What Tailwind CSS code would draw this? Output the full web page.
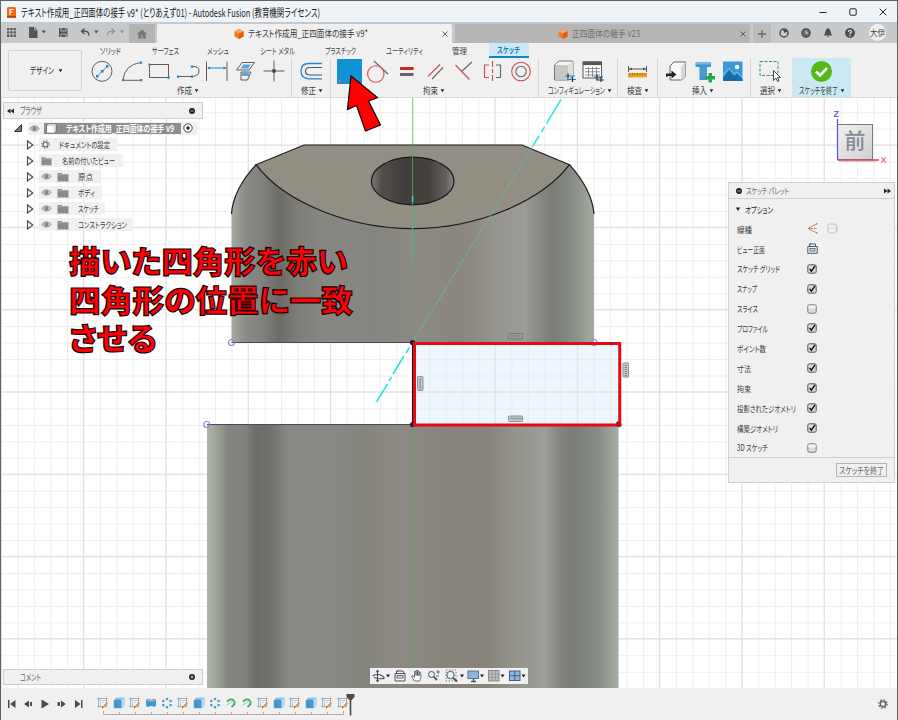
<!DOCTYPE html>
<html lang="ja">
<head>
<meta charset="utf-8">
<title>Autodesk Fusion</title>
<script src="https://cdn.jsdelivr.net/npm/@tailwindcss/browser@4"></script>
</head>
<body class="w-[898px] h-[720px] overflow-hidden bg-[#5f6262] font-['Noto_Sans_CJK_JP','Noto_Sans',sans-serif] text-[9px] leading-none text-[#3c3c3c]">
<svg width="0" height="0" class="absolute">
  <defs>
    <symbol id="eye" viewBox="0 0 12 10"><path d="M.8 5Q6-.8 11.2 5Q6 10.8.8 5Z" fill="#ddd" stroke="#858585" stroke-width="1.1"/><circle cx="6" cy="5" r="2.3" fill="#858585"/></symbol>
    <symbol id="folder" viewBox="0 0 12 10"><path d="M.5 1h4l1 1H11.500v7.500H.5Z" fill="#8c8c8c"/><path d="M1 2.700h10.500" stroke="#c9c9c9" stroke-width=".6"/></symbol>
    <symbol id="tri" viewBox="0 0 8 10"><path d="M1.500 1L6.800 5L1.500 9Z" fill="#fff" stroke="#444" stroke-width="1.1"/></symbol>
    <symbol id="logo" viewBox="0 0 10 10"><path d="M5 0L9.500 2.300V7.600L5 10L.5 7.600V2.300Z" fill="#f47a20"/><path d="M5 0L9.500 2.300L5 4.600L.5 2.300Z" fill="#fba768"/><path d="M5 4.600L9.500 2.300V7.600L5 10Z" fill="#e0600f"/></symbol>
    <symbol id="on" viewBox="0 0 10 10"><rect x=".8" y=".8" width="8.400" height="8.400" rx="1.600" fill="#d9d9d9" stroke="#555"/><path d="M2.600 4.800L4.400 7.200L8 1.800" fill="none" stroke="#111" stroke-width="1.400"/></symbol>
    <symbol id="off" viewBox="0 0 10 10"><rect x=".8" y=".8" width="8.400" height="8.400" rx="1.600" fill="#dcdcdc" stroke="#777"/><rect x="1.500" y="1.500" width="7" height="3" fill="#f4f4f4"/></symbol>
    <symbol id="x" viewBox="0 0 8 8"><path d="M1.500 1.500L6.500 6.500M6.500 1.500L1.500 6.500" stroke="#555" stroke-width=".9"/></symbol>
    <symbol id="sk" viewBox="0 0 12 12"><path d="M1.500 1.500h8v8h-8Z" fill="#f3f8fb" stroke="#8b99a3" stroke-width=".8"/><path d="M3.500 1v8.500M1 3.500h8.500M3.500 8L8 3" stroke="#9fb5c4" stroke-width=".6"/><path d="M5.500 10.500L10.500 5.500" stroke="#f08a2c" stroke-width="1.700"/><path d="M4.800 11.200L6 10" stroke="#444" stroke-width="1"/><path d="M.7.700h1.500v1.500H.7ZM8.800.700h1.500v1.500H8.800ZM.7 8.800h1.500v1.500H.7Z" fill="#5ca9dc"/></symbol>
    <symbol id="bx" viewBox="0 0 12 12"><path d="M1 3L3 1H11V9L9 11H1Z" fill="#cfe1ee" stroke="#7c9fb8" stroke-width=".5"/><rect x="1" y="3" width="7.500" height="8" rx="1" fill="#3d97d8"/><path d="M1 3L3 1.200H10.500L8.500 3Z" fill="#7dbdea"/></symbol>
    <symbol id="rv" viewBox="0 0 12 12"><path d="M1 4Q1 2 3 2Q6 4 9 2Q11 2 11 4V8Q11 10 9 10Q6 8 3 10Q1 10 1 8Z" fill="#3d97d8"/><path d="M1.500 3.800Q2 2.300 3 2.300Q6 4 9 2.300Q10.500 2.500 10.500 3.800Q6 6 1.500 3.800Z" fill="#9bcbea" stroke="#6a7a86" stroke-width=".5"/></symbol>
    <symbol id="pt" viewBox="0 0 12 12"><g fill="#4d9fd8"><rect x="4.800" y=".8" width="2.300" height="2.300"/><rect x="8.500" y="2.800" width="2.300" height="2.300"/><rect x="8.500" y="7" width="2.300" height="2.300"/><rect x="4.800" y="9" width="2.300" height="2.300"/><rect x="1.200" y="7" width="2.300" height="2.300"/><rect x="1.200" y="2.800" width="2.300" height="2.300"/></g></symbol>
    <symbol id="gr" viewBox="0 0 12 12"><path d="M2 4.500Q6 1 8.800 3.500Q11.300 6.500 6.500 10" fill="none" stroke="#4ba567" stroke-width="1.700"/><path d="M1.500 8.500Q5.500 4.500 8 5.500" fill="none" stroke="#b9dcc3" stroke-width="1.500"/></symbol>
    <symbol id="dn" viewBox="0 0 6 6"><path d="M.8 1.500H5.200L3 5Z" fill="#222"/></symbol>
  </defs>
</svg>

<div class="flex flex-col w-[896px] h-[719px] ml-px mt-px pt-px bg-[#f0f0f0]">
  <!-- title bar -->
  <header class="flex items-center h-[20px] bg-[#eff4f9] text-[11px] text-[#1b1b1b] pl-[6px]">
    <svg class="w-[9px] h-[11px] mr-[5px]" viewBox="0 0 9 11"><rect width="9" height="11" rx="1.500" fill="#ee6a12"/><path d="M3 8V2.500H6.300M3 5H5.600" fill="none" stroke="#fff" stroke-width="1.200"/><path d="M0 9h9v1.500H0Z" fill="#a8410a"/></svg>
    <span data-w="299">テキスト作成用_正四面体の接手 v9* (とりあえず01) - Autodesk Fusion (教育機関ライセンス)</span>
    <div class="ml-auto flex items-center gap-[22px] pr-[10px]">
      <svg class="w-2 h-2" viewBox="0 0 8 8"><path d="M.5 4.500h7" stroke="#222"/></svg>
      <svg class="w-2 h-2" viewBox="0 0 8 8"><rect x=".8" y=".8" width="6.400" height="6.400" rx="1" fill="none" stroke="#222"/></svg>
      <svg class="w-2 h-2" viewBox="0 0 8 8"><path d="M.7.700L7.300 7.300M7.300.700L.7 7.300" stroke="#222"/></svg>
    </div>
  </header>

  <!-- quick access and document tabs -->
  <nav class="flex items-end h-[21px] bg-[#c8c9ca]">
    <div class="flex items-center h-[21px] w-[128px]">
      <svg class="w-[128px] h-[21px]" viewBox="1 22 128 21">
        <path d="M7 28h2.300v2.300H7ZM10.300 28h2.300v2.300h-2.300ZM13.600 28h2.300v2.300h-2.300ZM7 31.300h2.300v2.300H7ZM10.300 31.300h2.300v2.300h-2.300ZM13.600 31.300h2.300v2.300h-2.300ZM7 34.600h2.300v2.300H7ZM10.300 34.600h2.300v2.300h-2.300ZM13.600 34.600h2.300v2.300h-2.300Z" fill="#555"/>
        <path d="M29 27h5.500l3 3v8H29Z" fill="#555"/><path d="M34.500 27v3h3" fill="none" stroke="#ccc" stroke-width=".7"/>
        <path d="M41.500 30.500h4.500l-2.200 3ZM94 30.500h4.500l-2.200 3Z" fill="#555"/><path d="M120 30.500h4l-2 3Z" fill="#888"/>
        <path d="M59 28h8.500v9H59Z" fill="#555"/><path d="M61 28v3h5v-3M61 37v-3h5v3" fill="none" stroke="#ccc" stroke-width=".8"/>
        <path d="M84.500 28.500L81.500 31.300L84.500 34M81.800 31.300H85.500Q88.800 31.300 88.800 35.500" fill="none" stroke="#555" stroke-width="1.400"/>
        <path d="M111.500 28.500L114.500 31.300L111.500 34M114.200 31.300H111Q107.500 31.300 107.500 35.500" fill="none" stroke="#8e8e8e" stroke-width="1.100"/>
      </svg>
    </div>
    <div class="flex items-center justify-center w-[26px] h-[19px] bg-[#b4b4b4]"><svg class="w-[10px] h-[10px]" viewBox="0 0 10 10"><path d="M5 .5L10 5H8.800V9.500H1.200V5H0Z" fill="#777"/><path d="M4 9.500V6.500H6V9.500" fill="#999"/></svg></div>
    <div class="flex items-center ml-[2px] w-[295px] h-[19px] bg-[#f0f0f0] rounded-t-[2px] pl-[77px] pr-[3px]">
      <svg class="w-[10px] h-[10px] mr-1"><use href="#logo"/></svg><span data-w="120" class="text-[9.5px]">テキスト作成用_正四面体の接手 v9*</span>
      <svg class="w-2 h-2 ml-auto"><use href="#x"/></svg>
    </div>
    <div class="flex items-center ml-[3px] w-[295px] h-[19px] bg-[#b6b6b6] pl-[103px] pr-[3px] text-[#707070]">
      <svg class="w-[10px] h-[10px] mr-1"><use href="#logo"/></svg><span data-w="68" class="text-[9.5px]">正四面体の継手 v23</span>
      <svg class="w-2 h-2 ml-auto"><use href="#x"/></svg>
    </div>
    <div class="flex items-center justify-center ml-[3px] w-[18px] h-[19px] bg-[#bcbcbc]"><svg class="w-[10px] h-[10px]" viewBox="0 0 10 10"><path d="M5 1v8M1 5h8" stroke="#666" stroke-width="1.300"/></svg></div>
    <div class="flex items-center gap-3 h-[21px] ml-[8px] text-[#4f4f4f]">
      <svg class="w-[10px] h-[10px]" viewBox="0 0 10 10"><circle cx="5" cy="5" r="4" fill="none" stroke="#4f4f4f" stroke-width="1.500"/><path d="M4 1.500L5.500 5L9 3L7 1Z" fill="#4f4f4f"/></svg>
      <svg class="w-[10px] h-[10px]" viewBox="0 0 10 10"><circle cx="5" cy="5" r="4" fill="#6c6c6c" stroke="#4f4f4f" stroke-width="1.600"/><path d="M5 2.500V5.200H7.300" fill="none" stroke="#ddd"/></svg>
      <svg class="w-[10px] h-[10px]" viewBox="0 0 10 10"><path d="M5 0Q7.500.8 7.800 4Q8 6.500 9.300 7.500H.7Q2 6.500 2.200 4Q2.500.8 5 0ZM3.800 8.300H6.200Q5 10.500 3.800 8.300Z" fill="#4f4f4f"/></svg>
      <svg class="w-[10px] h-[10px]" viewBox="0 0 10 10"><circle cx="5" cy="5" r="5" fill="#4f4f4f"/><path d="M3.400 4Q3.500 2.300 5 2.300T6.500 3.800Q6.300 4.500 5 5.200V6.200M5 7v1.200" fill="none" stroke="#eee" stroke-width="1.100"/></svg>
    </div>
    <div class="flex items-center justify-start pl-px ml-[14px] mb-[2px] w-[17px] h-[17px] rounded-full bg-[#eeeeee] text-[8.5px] whitespace-nowrap"><span data-w="15">大伊</span></div>
  </nav>

  <!-- ribbon -->
  <section class="flex flex-row h-[55px] bg-[#f0f0f0] border-b border-[#d9d9d9]">
    <div class="w-[87px] pt-[7px] pl-[7px]"><div class="flex items-center pl-[21px] gap-1 w-[74px] h-[41px] border border-[#d2d2d2] rounded-[2px] text-[#222]"><span data-w="24">デザイン</span><svg class="w-[5px] h-[5px]"><use href="#dn"/></svg></div></div>
    <div class="flex flex-col">
      <div class="flex h-[15px] text-[8.5px] text-[#444]">
        <div class="flex items-center pl-[12px] w-[64px]"><span data-w="21">ソリッド</span></div>
        <div class="flex items-center w-[55px]"><span data-w="27">サーフェス</span></div>
        <div class="flex items-center w-[53px]"><span data-w="22">メッシュ</span></div>
        <div class="flex items-center w-[65px]"><span data-w="35">シート メタル</span></div>
        <div class="flex items-center w-[61px]"><span data-w="31">プラスチック</span></div>
        <div class="flex items-center w-[66px]"><span data-w="37">ユーティリティ</span></div>
        <div class="flex items-center w-[37px]"><span data-w="15">管理</span></div>
        <div class="flex items-center pl-[8px] w-[40px] bg-[#cde8f5] border-b-2 border-[#1583bd] text-[#0d80bd] font-bold"><span data-w="23">スケッチ</span></div>
      </div>
      <div class="flex h-[39px]">
        <div class="flex flex-col w-[203px]">
          <svg class="w-[203px] h-[27px]" viewBox="88 58 203 27" fill="none" stroke="#5e5e5e" stroke-width="1">
            <circle cx="102" cy="71.300" r="10"/><path d="M97.500 76L107 66.500" stroke="#1f86cc"/>
            <path d="M123 80Q124.500 64.500 141 62.500M123 80.300H141"/><rect x="149.500" y="64.500" width="19" height="13"/>
            <path d="M178 76.500H192M192 66.500Q199 66 199 71T192 76.500"/>
            <path d="M206.500 61.500V81M227 61.500V81"/><path d="M208 68H226" stroke="#1f86cc"/>
            <path d="M236.500 70L242 62.500H254.500L249 70ZM241 72H251L247.500 80H241Z"/><path d="M240.500 68.500L243.500 64.500H251L248 68.500ZM242 72.500H249V76H242Z" fill="#57a7df" stroke="none"/>
            <path d="M274 60.500V81.500M263.500 71H284.500"/><rect x="272.300" y="69.300" width="3.400" height="3.400" fill="#444" stroke="none"/>
            <g fill="#1f86cc" stroke="none"><path d="M96 75h2.500v2.500H96ZM101 70h2.500v2.500H101ZM106 65h2.500v2.500H106ZM122 79h2.200v2.200H122ZM140 79h2.200v2.200H140ZM140 61.500h2.200v2.200H140ZM148.500 63.500h2v2h-2ZM167.500 76.500h2.200v2.200h-2.200ZM177 75.500h2.200v2.200H177ZM190.800 75.500h2.200v2.200h-2.200ZM190.800 65.500h2.200v2.200h-2.200Z"/><path d="M207 68L210 66.500V69.500ZM226.500 68L223.500 66.500V69.500Z"/></g>
          </svg>
          <div class="flex items-center gap-[2px] h-[10px] pl-[89px]"><span data-w="15">作成</span><svg class="w-[5px] h-[5px]"><use href="#dn"/></svg></div>
        </div>
        <div class="flex flex-col w-[40px] border-x border-[#d6d6d6]">
          <svg class="w-[38px] h-[27px]" viewBox="292 58 38 27" fill="none"><path d="M322 63.500H309Q301 63.500 301 71T309 78.800H322" stroke="#2387cf" stroke-width="1.300"/><path d="M322 67.500H310Q305.500 67.500 305.500 71.200T310 75H322" stroke="#555" stroke-width="1.200"/></svg>
          <div class="flex items-center gap-[2px] h-[10px] pl-[9px]"><span data-w="15">修正</span><svg class="w-[5px] h-[5px]"><use href="#dn"/></svg></div>
        </div>
        <div class="flex flex-col w-[208px] border-r border-[#d6d6d6]">
          <svg class="w-[207px] h-[27px]" viewBox="331 58 207 27" fill="none" stroke="#666" stroke-width="1.100">
            <rect x="337" y="59" width="25" height="25" fill="#0d93d6" stroke="none"/><path d="M340 62V80.500H357" stroke="#3a7fc0" stroke-width=".8"/><rect x="338.800" y="79.500" width="2.300" height="2.300" fill="#c96a9b" stroke="none"/>
            <path d="M374 61L388 74"/><circle cx="375.800" cy="74" r="8.200" stroke="#d0504f"/>
            <path d="M400 74.500h13.500" stroke-width="3"/><path d="M400 68.500h13.500" stroke="#cb242b" stroke-width="3"/>
            <path d="M428 76.500L440 64.500" stroke="#cf4a4d"/><path d="M432 79L443 67.500"/>
            <path d="M461.500 71.500L472 62"/><path d="M455.500 65L469.500 79.500" stroke="#cf4a4d"/>
            <path d="M496 65H500.500V77.500H496"/><path d="M489 65H484.500V77.500H489M492.500 61V67M492.500 69V73M492.500 75V81" stroke="#cf4a4d"/>
            <circle cx="521" cy="71.500" r="9.300" stroke="#cf4a4d"/><circle cx="521" cy="71.500" r="5.200"/>
          </svg>
          <div class="flex items-center gap-[2px] h-[10px] pl-[92px]"><span data-w="15">拘束</span><svg class="w-[5px] h-[5px]"><use href="#dn"/></svg></div>
        </div>
        <div class="flex flex-col w-[79px] border-r border-[#d6d6d6]">
          <svg class="w-[78px] h-[27px]" viewBox="539 58 78 27" fill="none" stroke="#555" stroke-width="1">
            <path d="M554.500 65L559 61H573V76L569 80H554.500Z" fill="#f4f4f4" stroke="#777"/><rect x="555" y="65" width="13.500" height="14.500" fill="#c7c7c7" stroke="none"/><path d="M568.500 65L573 61V76L568.500 80Z" fill="#ddd" stroke="none"/>
            <path d="M565 76h10M567 79.500h9" stroke="#1f86cc"/><path d="M568 73.500v5M572.500 77v5" stroke="#333" stroke-width="1.300"/>
            <rect x="583" y="62" width="18.500" height="16" fill="#fff"/><path d="M583 63.300h18.500" stroke-width="3.600"/><path d="M585 68.500h15M585 71.800h15M585 75h15M588.500 67v10M592.500 67v10M596.500 67v10" stroke="#777" stroke-width=".8"/><path d="M594 77h9" stroke="#1f86cc" stroke-width="1.300"/><path d="M596 80h8M597 74.500v5M601 77v5" stroke="#333" stroke-width="1.200"/>
          </svg>
          <div class="flex items-center gap-[2px] h-[10px] pl-[9px]"><span data-w="57">コンフィギュレーション</span><svg class="w-[5px] h-[5px]"><use href="#dn"/></svg></div>
        </div>
        <div class="flex flex-col w-[40px] border-r border-[#d6d6d6]">
          <svg class="w-[39px] h-[27px]" viewBox="618 58 39 27"><path d="M628.500 66v6M646.500 66v6M629 69h17" stroke="#555" fill="none"/><path d="M629 69l3-1.500v3ZM646 69l-3-1.500v3Z" fill="#555"/><rect x="628" y="73" width="19" height="4.500" fill="#f2a526"/><path d="M630 73v2.500M632.500 73v2.500M635 73v2.500M637.500 73v2.500M640 73v2.500M642.500 73v2.500M645 73v2.500" stroke="#8b5a0c" stroke-width=".7"/></svg>
          <div class="flex items-center gap-[2px] h-[10px] pl-[9px]"><span data-w="15">検査</span><svg class="w-[5px] h-[5px]"><use href="#dn"/></svg></div>
        </div>
        <div class="flex flex-col w-[93px] border-r border-[#d6d6d6]">
          <svg class="w-[92px] h-[27px]" viewBox="658 58 92 27">
            <path d="M670 66L674 62H685.500V76L681.500 80H670Z" fill="#fafafa" stroke="#666"/><path d="M681 80V66.500L685.500 62V76Z" fill="#d7d7d7"/><path d="M666 77V73.500H671.500V70.500L676.500 74.500L671.500 78.500V76H668.500Z" fill="#222"/>
            <path d="M695.500 62.500H711V67H707V80H699.500V67H695.500Z" fill="#3f95d0"/><path d="M697 62H709.500L711 64.500H695.500Z" fill="#75b7e4"/><path d="M699.500 69h7.500M699.500 72h7.500M699.500 75h7.500" stroke="#6bb2e0" stroke-width=".7"/><path d="M708.500 73h3.500v3h3v3.500h-3v3h-3.500v-3h-3v-3.500h3Z" fill="#22a84b"/>
            <rect x="723" y="61.500" width="19.500" height="19.500" fill="#3c97da"/><path d="M723 78L729 70L734 76L737 73.500L742.500 79V81H723Z" fill="#1b6bab"/><path d="M723 75L729 68L734 74L737 72L742.500 78" fill="none" stroke="#84c0eb"/><circle cx="737" cy="67" r="2.300" fill="#e9f5fd"/>
          </svg>
          <div class="flex items-center gap-[2px] h-[10px] pl-[34px]"><span data-w="15">挿入</span><svg class="w-[5px] h-[5px]"><use href="#dn"/></svg></div>
        </div>
        <div class="flex flex-col w-[41px]">
          <svg class="w-[41px] h-[27px]" viewBox="751 58 41 27"><rect x="760" y="61.500" width="18" height="14" fill="none" stroke="#2e9b57" stroke-dasharray="3 1.500"/><path d="M773.500 70.500V80.500L776 78.200L777.700 81.500L779 80.800L777.500 77.500H780.500Z" fill="#fff" stroke="#333" stroke-width=".9"/></svg>
          <div class="flex items-center gap-[2px] h-[10px] pl-[9px]"><span data-w="15">選択</span><svg class="w-[5px] h-[5px]"><use href="#dn"/></svg></div>
        </div>
        <div class="flex flex-col w-[59px] bg-[#cbe8f5]">
          <svg class="w-[59px] h-[27px]" viewBox="792 58 59 27"><circle cx="821.500" cy="71.500" r="10.500" fill="#54b816"/><path d="M816 71.500L820 75.500L827 68" fill="none" stroke="#fff" stroke-width="2.600"/></svg>
          <div class="flex items-center gap-[2px] h-[10px] pl-[7px]"><span data-w="39">スケッチを終了</span><svg class="w-[5px] h-[5px]"><use href="#dn"/></svg></div>
        </div>
      </div>
    </div>
  </section>

  <!-- viewport -->
  <main class="relative h-[590px] bg-white overflow-hidden">
    <svg class="block w-[896px] h-[590px]" viewBox="1 98 896 590">
      <defs>
        <pattern id="minor" x="1.200" y="62.850" width="16.457" height="16.457" patternUnits="userSpaceOnUse"><path d="M0 .5H16.457M.5 0V16.457" stroke="#eeeeee" stroke-width="1"/></pattern>
        <pattern id="major" x=".8" y="62.200" width="82.285" height="82.285" patternUnits="userSpaceOnUse"><path d="M0 .5H82.285M.5 0V82.285" stroke="#dedede" stroke-width="1"/></pattern>
        <linearGradient id="up"><stop offset="0" stop-color="#a6aaa2"/><stop offset=".04" stop-color="#888b84"/><stop offset=".09" stop-color="#7f807a"/><stop offset=".13" stop-color="#6c6a64"/><stop offset=".18" stop-color="#7e7d77"/><stop offset=".26" stop-color="#888883"/><stop offset=".4" stop-color="#86857f"/><stop offset=".5" stop-color="#8b8982"/><stop offset=".65" stop-color="#8b867f"/><stop offset=".72" stop-color="#96948e"/><stop offset=".81" stop-color="#9c9b95"/><stop offset=".86" stop-color="#83857e"/><stop offset=".885" stop-color="#7a7d75"/><stop offset=".94" stop-color="#878c84"/><stop offset="1" stop-color="#a6aca2"/></linearGradient>
        <linearGradient id="lo"><stop offset="0" stop-color="#b0b5ac"/><stop offset=".025" stop-color="#9b9f96"/><stop offset=".05" stop-color="#83867f"/><stop offset=".095" stop-color="#7f817a"/><stop offset=".12" stop-color="#6c6c66"/><stop offset=".15" stop-color="#706f69"/><stop offset=".2" stop-color="#8a8882"/><stop offset=".3" stop-color="#898984"/><stop offset=".38" stop-color="#84847d"/><stop offset=".47" stop-color="#8d8a83"/><stop offset=".6" stop-color="#88847c"/><stop offset=".68" stop-color="#88847b"/><stop offset=".75" stop-color="#94948d"/><stop offset=".82" stop-color="#9c9d97"/><stop offset=".86" stop-color="#81837c"/><stop offset=".89" stop-color="#7a7d76"/><stop offset=".95" stop-color="#868d84"/><stop offset="1" stop-color="#a5ada2"/></linearGradient>
        <linearGradient id="hole"><stop offset="0" stop-color="#7b7a76"/><stop offset=".12" stop-color="#53504c"/><stop offset=".4" stop-color="#3f3c39"/><stop offset=".7" stop-color="#46423e"/><stop offset=".9" stop-color="#62605c"/><stop offset="1" stop-color="#8a8985"/></linearGradient>
        <linearGradient id="cube" x1="0" y1="0" x2="1" y2="1"><stop offset="0" stop-color="#f1f1f1"/><stop offset="1" stop-color="#cfd0d2"/></linearGradient>
      </defs>
      <rect x="1" y="98" width="896" height="590" fill="url(#minor)"/>
      <rect x="1" y="98" width="896" height="590" fill="url(#major)"/>
      <path d="M412.600 98V145" stroke="#79dd79"/>
      <!-- solid bodies -->
      <path d="M256 164.700Q233 190 231.500 214V342.500H594V214Q592 190 569.500 164.700Z" fill="url(#up)"/>
      <path d="M256 164.700L304 145H522L569.500 164.700C540 203 475 228.700 412.700 228.700S285 203 256 164.700Z" fill="#928e83" stroke="#1c1c1a" stroke-width="1.200"/>
      <path d="M256 164.700Q233 190 231.500 214M569.500 164.700Q592 190 594 214" fill="none" stroke="#1c1c1a" stroke-width="1.200"/>
      <ellipse cx="412.700" cy="181" rx="41.300" ry="23.800" fill="url(#hole)" stroke="#161614" stroke-width="1.200"/>
      <rect x="207" y="424.500" width="411.500" height="263.500" fill="url(#lo)"/>
      <!-- axes and construction lines -->
      <path d="M412.600 145V262" stroke="#58a95a" stroke-width=".8"/><path d="M412.600 425V688" stroke="#5ca35a" stroke-width=".8"/>
      <path d="M412.600 262V342" stroke="#6f9a69" stroke-width=".6"/>
      <path d="M412.600 196v6" stroke="#25e0d6" stroke-width="1.500"/><path d="M412.600 206v55" stroke="#4bb997" stroke-width=".8"/>
      <path d="M561 99.500L546.500 123.500M544.500 127L541.500 132M539 136L533.500 145" stroke="#2fe9e4" stroke-width="1.500"/>
      <path d="M533.500 145L412.600 342.500" stroke="#62b9a2" stroke-width=".9" stroke-dasharray="24 2 5 2"/>
      <path d="M409.500 347.500L406 353M404 356L393 374M391.500 377L389 381M387.500 384L376.500 402" stroke="#2ce0dc" stroke-width="1.500"/>
      <!-- sketch profile -->
      <path d="M231.500 342.500H412.600M207 424.500H412.600" stroke="#4d4860" stroke-width="1.200"/>
      <rect x="414" y="343" width="206" height="82" fill="#d7ecfb" fill-opacity=".42"/>
      <g fill="none" stroke="#a17fd0" stroke-width="1.200"><circle cx="231.500" cy="342.500" r="3"/><circle cx="206.700" cy="424.500" r="3"/><circle cx="594" cy="342.500" r="3"/></g>
      <path d="M412.700 342V425" stroke="#151520" stroke-width="1.500"/>
      <circle cx="412.500" cy="342.500" r="2.600" fill="#1d1836"/><circle cx="412.500" cy="424.500" r="2.600" fill="#28204c"/>
      <rect x="414.500" y="343.500" width="205.200" height="81.500" fill="none" stroke="#e60b12" stroke-width="3"/><path d="M615.500 423.500H618V421Z" fill="#111"/><circle cx="619" cy="424.500" r="2.500" fill="#b50d12"/>
      <g stroke="#8b9195" stroke-width="1" fill="#c9cdcf"><rect x="508.500" y="416" width="14" height="5.500" rx=".8"/><rect x="417.500" y="376.500" width="5.500" height="14" rx=".8"/><rect x="623" y="363" width="5.500" height="14" rx=".8"/></g>
      <rect x="508.500" y="333.500" width="14" height="5.500" rx=".8" fill="none" stroke="#777873"/>
      <path d="M510.500 418.500h11M420.200 378.500v11M625.800 365v11" stroke="#777" stroke-width="2" stroke-dasharray="1 1"/><path d="M511 336h10" stroke="#7b7b76" stroke-width="1.500" stroke-dasharray="1 1"/>
      <!-- view cube -->
      <rect x="839" y="159" width="37" height="3" fill="#d9a0a0" opacity=".5"/>
      <rect x="837.500" y="124.500" width="35" height="35" fill="url(#cube)" stroke="#777b80"/>
      <path d="M837.500 119V159.500" stroke="#5552d6" stroke-width="1.200"/><path d="M837.500 160H879" stroke="#c84d58" stroke-width="1.500"/>
      <text x="844.500" y="148" font-size="21" fill="#858b94" font-weight="500" font-family="Noto Sans CJK JP, sans-serif" textLength="21">前</text>
      <text x="833.500" y="116.500" font-size="9" fill="#6662dc" font-family="Liberation Sans, sans-serif" font-weight="bold">Z</text>
      <text x="880.500" y="162.800" font-size="9" fill="#ee7077" font-family="Liberation Sans, sans-serif" font-weight="bold">X</text>
    </svg>

    <!-- note over the model -->
    <div class="absolute left-[68px] top-[143px] flex flex-col text-[31px] font-black leading-[38.500px] text-[#fb0207] [-webkit-text-stroke:1.200px_#180000] whitespace-nowrap">
      <div class="flex h-[38.500px]"><span data-w="279">描いた四角形を赤い</span></div>
      <div class="flex h-[38.500px]"><span data-w="284">四角形の位置に一致</span></div>
      <div class="flex h-[38.500px]"><span data-w="88">させる</span></div>
    </div>

    <!-- browser tree -->
    <aside class="absolute left-[2px] top-[4px] w-[200px] flex flex-col">
      <div class="flex items-center h-[17px] bg-[#f0f0f0] border border-[#cfcfcf] pl-[3px] pr-[7px] text-[#666]">
        <svg class="w-[7px] h-[6px] mr-[6px]" viewBox="0 0 7 6"><path d="M3.500.500V5.500L0 3ZM7 .500V5.500L3.500 3Z" fill="#222"/></svg><span data-w="22">ブラウザ</span>
        <svg class="w-[6px] h-[6px] ml-auto" viewBox="0 0 6 6"><circle cx="3" cy="3" r="3" fill="#222"/><path d="M1.500 3h3" stroke="#ddd" stroke-width=".8"/></svg>
      </div>
      <div class="flex items-center h-[14px] mt-[2px] pl-[11px]">
        <svg class="w-[8px] h-[8px] mr-[6px]" viewBox="0 0 8 8"><path d="M7.500.500V7.500H.5Z" fill="#777" stroke="#333"/></svg>
        <div class="flex items-center h-[13px] w-[170px] bg-[#f0f0f0] pl-[1px]">
          <svg class="w-[11px] h-[9px] mr-1"><use href="#eye"/></svg>
          <div class="flex items-center w-[137px] h-[11px] bg-[#8e8e8e] text-white font-bold"><svg class="w-[12px] h-[11px] ml-[1px] mr-[9px]" viewBox="0 0 12 11"><path d="M1.500 2.500L3.500 .8H11V8.500L9 10.200H1.500Z" fill="#fff" stroke="#555" stroke-width=".7"/><path d="M9 10V2.500H2" fill="none" stroke="#bbb" stroke-width=".7"/></svg><span data-w="108">テキスト作成用_正四面体の接手 v9</span></div>
          <svg class="w-[10px] h-[10px] ml-[2px]" viewBox="0 0 10 10"><circle cx="5" cy="5" r="4.200" fill="#fff" stroke="#333" stroke-width=".9"/><circle cx="5" cy="5" r="1.700" fill="#222"/></svg>
        </div>
      </div>
      <div class="flex flex-col gap-[3px] mt-[3px] pl-[23px] text-[8.500px]">
        <div class="flex items-center"><svg class="w-[8px] h-[10px] mr-[5px]"><use href="#tri"/></svg><div class="flex items-center h-[13px] w-[78px] bg-[#f0f0f0] pl-[2px]"><svg class="w-[9px] h-[9px] mr-[9px]" viewBox="0 0 10 10"><circle cx="5" cy="5" r="2.700" fill="none" stroke="#777" stroke-width="1.500"/><circle cx="5" cy="5" r="4.200" fill="none" stroke="#777" stroke-width="1.200" stroke-dasharray="1.650 1.650"/></svg><span data-w="51">ドキュメントの設定</span></div></div>
        <div class="flex items-center"><svg class="w-[8px] h-[10px] mr-[5px]"><use href="#tri"/></svg><div class="flex items-center h-[13px] w-[84px] bg-[#f0f0f0] pl-[2px]"><svg class="w-[11px] h-[10px] mr-[10px]"><use href="#folder"/></svg><span data-w="53">名前の付いたビュー</span></div></div>
        <div class="flex items-center"><svg class="w-[8px] h-[10px] mr-[5px]"><use href="#tri"/></svg><div class="flex items-center h-[13px] w-[61px] bg-[#f0f0f0] pl-[2px]"><svg class="w-[11px] h-[9px] mr-[5px]"><use href="#eye"/></svg><svg class="w-[12px] h-[10px] mr-[9px]"><use href="#folder"/></svg><span data-w="15">原点</span></div></div>
        <div class="flex items-center"><svg class="w-[8px] h-[10px] mr-[5px]"><use href="#tri"/></svg><div class="flex items-center h-[13px] w-[63px] bg-[#f0f0f0] pl-[2px]"><svg class="w-[11px] h-[9px] mr-[5px]"><use href="#eye"/></svg><svg class="w-[12px] h-[10px] mr-[9px]"><use href="#folder"/></svg><span data-w="17">ボディ</span></div></div>
        <div class="flex items-center"><svg class="w-[8px] h-[10px] mr-[5px]"><use href="#tri"/></svg><div class="flex items-center h-[13px] w-[66px] bg-[#f0f0f0] pl-[2px]"><svg class="w-[11px] h-[9px] mr-[5px]"><use href="#eye"/></svg><svg class="w-[12px] h-[10px] mr-[9px]"><use href="#folder"/></svg><span data-w="21">スケッチ</span></div></div>
        <div class="flex items-center"><svg class="w-[8px] h-[10px] mr-[5px]"><use href="#tri"/></svg><div class="flex items-center h-[13px] w-[93px] bg-[#f0f0f0] pl-[2px]"><svg class="w-[11px] h-[9px] mr-[5px]"><use href="#eye"/></svg><svg class="w-[12px] h-[10px] mr-[9px]"><use href="#folder"/></svg><span data-w="49">コンストラクション</span></div></div>
      </div>
    </aside>

    <!-- sketch palette -->
    <aside class="absolute left-[727px] top-[84px] w-[167px] h-[301px] flex flex-col bg-[#f0f0f0] border border-[#cfcfcf] text-[8.500px]">
      <div class="flex items-center h-[16px] border-b border-[#d0d0d0] pl-[7px] pr-[3px] text-[#666]">
        <svg class="w-[6px] h-[6px] mr-[4px]" viewBox="0 0 6 6"><circle cx="3" cy="3" r="3" fill="#222"/><path d="M1.500 3h3" stroke="#ddd" stroke-width=".8"/></svg><span data-w="43">スケッチ パレット</span>
        <svg class="w-[7px] h-[6px] ml-auto" viewBox="0 0 7 6"><path d="M0 .500V5.500L3.500 3ZM3.500 .500V5.500L7 3Z" fill="#222"/></svg>
      </div>
      <div class="flex items-center h-[20px] pl-[6px] text-[#222]"><svg class="w-[6px] h-[6px] mr-[4px]"><use href="#dn"/></svg><span data-w="28">オプション</span></div>
      <div class="grid grid-cols-[69.500px_1fr] auto-rows-[19.900px] items-center pl-[8px] h-[239px] border-b border-[#d0d0d0]">
        <span data-w="15">線種</span><div class="flex gap-[9px]"><svg class="w-[11px] h-[11px]" viewBox="0 0 11 11"><path d="M10 .800L1 5.500L10 10" fill="none" stroke="#d97a5b"/><path d="M2 5.500h8" stroke="#777" stroke-dasharray="1.500 1"/><path d="M9 0h1.500v1.500H9ZM9 9.300h1.500v1.500H9Z" fill="#e07a50"/></svg><svg class="w-[11px] h-[11px]" viewBox="0 0 11 11"><path d="M1 2.500L2.500 1H7.500L10 3V8L7.500 10H2.500L1 8.500Z" fill="none" stroke="#bdbdbd"/><path d="M1 5.500h9" stroke="#ccc" stroke-dasharray="1.500 1"/></svg></div>
        <span data-w="28">ビュー正面</span><svg class="w-[11px] h-[11px]" viewBox="0 0 11 11"><path d="M.8 3.500H10.200V10.300H.8ZM2.500 3V1H8.500V3M4 .500L2.500 1.500" fill="none" stroke="#4b5966"/><rect x="3" y="5.500" width="5" height="2.500" fill="#cde" stroke="#4b5966" stroke-width=".8"/></svg>
        <span data-w="43">スケッチ グリッド</span><svg class="w-[10px] h-[10px]"><use href="#on"/></svg>
        <span data-w="20">スナップ</span><svg class="w-[10px] h-[10px]"><use href="#on"/></svg>
        <span data-w="21">スライス</span><svg class="w-[10px] h-[10px]"><use href="#off"/></svg>
        <span data-w="31">プロファイル</span><svg class="w-[10px] h-[10px]"><use href="#on"/></svg>
        <span data-w="29">ポイント数</span><svg class="w-[10px] h-[10px]"><use href="#on"/></svg>
        <span data-w="14">寸法</span><svg class="w-[10px] h-[10px]"><use href="#on"/></svg>
        <span data-w="14">拘束</span><svg class="w-[10px] h-[10px]"><use href="#on"/></svg>
        <span data-w="59">投影されたジオメトリ</span><svg class="w-[10px] h-[10px]"><use href="#on"/></svg>
        <span data-w="41">構築ジオメトリ</span><svg class="w-[10px] h-[10px]"><use href="#on"/></svg>
        <span data-w="31">3D スケッチ</span><svg class="w-[10px] h-[10px]"><use href="#off"/></svg>
      </div>
      <div class="flex flex-1 items-center justify-end pr-[7px]"><button class="flex items-center justify-start pl-[2px] w-[51px] h-[14px] border border-[#b5b5b5] text-[#666] text-[9px]"><span data-w="45">スケッチを終了</span></button></div>
    </aside>

    <!-- comment bar -->
    <div class="absolute left-[2px] top-[571px] flex items-center w-[200px] h-[16px] bg-[#f0f0f0] border border-[#cfcfcf] pl-[16px] pr-[7px] text-[#666]"><span data-w="21">コメント</span>
      <svg class="w-[6px] h-[6px] ml-auto" viewBox="0 0 6 6"><circle cx="3" cy="3" r="3" fill="#222"/><path d="M1.500 3h3M3 1.500v3" stroke="#eee" stroke-width=".8"/></svg></div>

    <!-- navigation bar -->
    <div class="absolute left-[369px] top-[570px] w-[158px] h-[16px] bg-[#f0f0f0]">
      <svg class="w-[158px] h-[16px]" viewBox="370 668 158 16" fill="none" stroke="#4c5358">
        <path d="M377.500 670V682M372.500 676Q377.500 672.500 382.500 676T377.500 678.500L374 677.500" stroke-width="1.200"/><path d="M375.800 672L377.500 669.500L379.300 672ZM375.800 680L377.500 682.500L379.300 680Z" fill="#4c5358" stroke="none"/>
        <path d="M395 673.500H405V681H395ZM396.500 673V671H403L404 673M398.500 670L396.500 671.500"/><rect x="397" y="675.500" width="6" height="2.500" fill="#cde" stroke-width=".8"/>
        <path d="M414.500 681L411.500 676.500L413 675.800L414.500 677.500V671.500H416V675.500V670.500H417.500V675.500V671H419V676V672.500H420.500L421 677L419.500 681Z" fill="#fff" stroke-width=".8"/>
        <circle cx="431.500" cy="674.500" r="3" fill="#e3f0f5"/><path d="M433.800 676.800L437 680" stroke-width="1.800"/><path d="M436 672h4M438 670v4M436 676h3" stroke-width=".8"/>
        <rect x="446" y="670" width="10" height="11" stroke-dasharray="1.500 1.500" stroke-width=".7"/><circle cx="450.500" cy="675" r="3.700" fill="#e3f3f5"/><path d="M453.200 678L457 681.500" stroke-width="1.900"/>
        <rect x="468" y="671" width="10.500" height="7.500" fill="#8db4de" stroke="#5a7289"/><path d="M471 681.500h5M473.500 679v2" stroke-width="1.500"/>
        <rect x="488.500" y="670.500" width="10.500" height="10.500" fill="#bcbcbc" stroke="#8d8d8d"/><path d="M488.500 674h10.500M488.500 677.500h10.500M492 670.500v10.500M495.500 670.500v10.500" stroke="#8f8f8f" stroke-width=".7"/>
        <rect x="509.500" y="671" width="10.500" height="9.500" fill="#93b7e3" stroke="#3d5f88"/><path d="M514.800 671v9.500M509.500 675.700H520" stroke="#3d5f88"/>
        <path d="M386 674.500h4l-2 3ZM460 674.500h4l-2 3ZM480 674.500h4l-2 3ZM500.500 674.500h4l-2 3ZM521.500 674.500h4l-2 3Z" fill="#222" stroke="none"/>
      </svg>
    </div>
  </main>

  <!-- timeline -->
  <footer class="flex flex-1 items-start bg-[#f0f0f0]">
    <svg class="w-[96px] h-[31px]" viewBox="1 688 96 31" fill="#4a4a4a"><path d="M8 700h1.500v8H8ZM15.500 700V708L10 704ZM29 700.500V707.500L24 704ZM30 702h2v4h-2ZM41.500 699.500V708.500L49 704ZM61 700.500V707.500L66 704ZM57.500 702h2.500v4h-2.500ZM75 700V708L80.500 704ZM81 700h1.500v8H81Z"/></svg>
    <div class="flex flex-col pt-[9px]">
      <div class="flex h-[14px] gap-1">
        <svg class="w-3 h-3"><use href="#sk"/></svg><svg class="w-3 h-3"><use href="#bx"/></svg><svg class="w-3 h-3"><use href="#sk"/></svg><svg class="w-3 h-3"><use href="#rv"/></svg><svg class="w-3 h-3"><use href="#pt"/></svg><svg class="w-3 h-3"><use href="#sk"/></svg><svg class="w-3 h-3"><use href="#bx"/></svg><svg class="w-3 h-3"><use href="#pt"/></svg><svg class="w-3 h-3"><use href="#gr"/></svg><svg class="w-3 h-3"><use href="#gr"/></svg><svg class="w-3 h-3"><use href="#sk"/></svg><svg class="w-3 h-3"><use href="#bx"/></svg><svg class="w-3 h-3"><use href="#sk"/></svg><svg class="w-3 h-3"><use href="#bx"/></svg><svg class="w-3 h-3"><use href="#sk"/></svg><svg class="w-3 h-3"><use href="#sk"/></svg>
      </div>
      <svg class="w-[252px] h-[6px]" viewBox="97 711 252 6"><path d="M103.500 711v3.500H343.500V711M119.500 712v2M135.500 712v2M151.500 712v2M167.500 712v2M183.500 712v2M199.500 712v2M215.500 712v2M231.500 712v2M247.500 712v2M263.500 712v2M279.500 712v2M295.500 712v2M311.500 712v2M327.500 712v2" fill="none" stroke="#b3aaa8"/></svg>
    </div>
    <svg class="w-[9px] h-[24px] mt-[5px] -ml-[3px]" viewBox="0 0 9 24"><path d="M.5 1H8.500V4L5.300 7.500V22.500H3.700V7.500L.5 4Z" fill="#4b4b4b"/></svg>
    <svg class="w-[10px] h-[10px] ml-auto mr-[9px] mt-[11px]" viewBox="0 0 10 10"><circle cx="5" cy="5" r="2.700" fill="none" stroke="#666" stroke-width="1.500"/><circle cx="5" cy="5" r="4.200" fill="none" stroke="#666" stroke-width="1.200" stroke-dasharray="1.650 1.650"/></svg>
  </footer>
</div>

<!-- pointer arrow spanning ribbon and viewport -->
<svg class="absolute left-[340px] top-[70px] w-[48px] h-[66px]" viewBox="340 70 48 66"><path d="M351 76L377.500 97.500L368.500 101L380.500 125L365.500 131L356.500 105.500L347.500 109.500Z" fill="#fe0000" stroke="#140000" stroke-width="1.200"/></svg>

<script>
  function fit(el) {
    el.style.transform = 'none';
    var w = el.getBoundingClientRect().width, t = +el.dataset.w;
    if (!w) return;
    el.style.transform = 'scaleX(' + t / w + ')';
    el.style.marginRight = (t - w) + 'px';
  }
  var labels = Array.from(document.querySelectorAll('[data-w]'));
  var watcher = new ResizeObserver(function (entries) {
    entries.forEach(function (e) { fit(e.target); });
  });
  labels.forEach(function (el) {
    el.style.display = 'inline-block';
    el.style.width = 'max-content';
    el.style.whiteSpace = 'nowrap';
    el.style.justifySelf = 'start';
    el.style.flexShrink = '0';
    el.style.fontFeatureSettings = '"palt"';
    el.style.transformOrigin = '0 50%';
    fit(el);
    watcher.observe(el);
  });
  window.addEventListener('load', function () { labels.forEach(fit); });
  document.fonts.ready.then(function () { labels.forEach(fit); });
</script>
</body>
</html>
